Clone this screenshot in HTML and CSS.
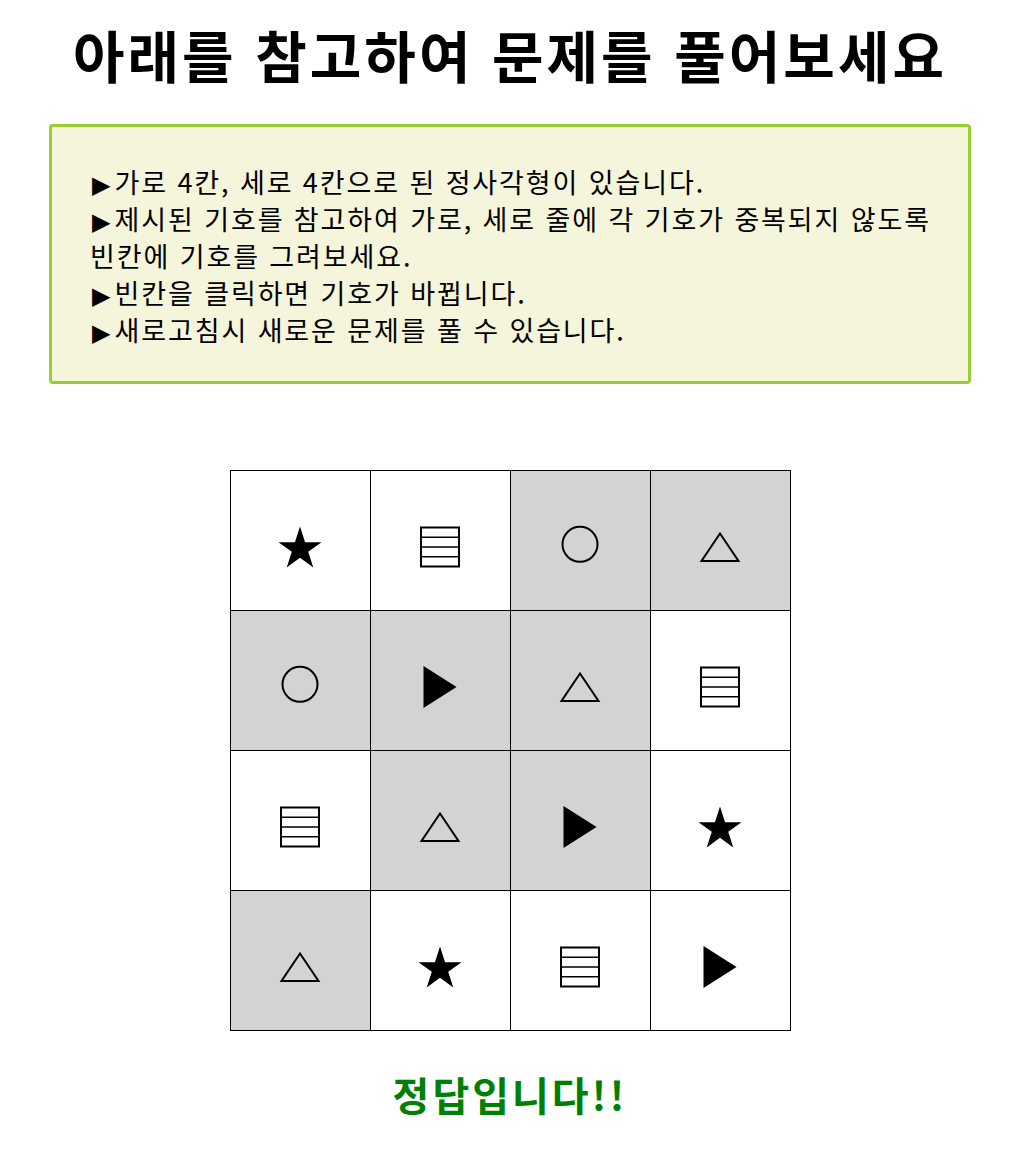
FILE: index.html
```html
<!DOCTYPE html>
<html lang="ko">
<head>
<meta charset="utf-8">
<title>문제</title>
<link rel="stylesheet" href="styles.css">
</head>
<body>
<svg class="defs" width="0" height="0" aria-hidden="true">
  <defs>
    <symbol id="star" viewBox="0 0 44 44">
      <polygon points="22,1.55 27.07,17.17 43.49,17.17 30.21,26.82 35.28,42.43 22,32.78 8.72,42.43 13.79,26.82 0.51,17.17 16.93,17.17" fill="#000"/>
    </symbol>
    <symbol id="lines" viewBox="0 0 44 44">
      <rect x="3" y="2.5" width="38" height="39" fill="none" stroke="#000" stroke-width="2"/>
      <path d="M3 12.25H41M3 22H41M3 31.75H41" stroke="#000" stroke-width="1.6"/>
    </symbol>
    <symbol id="circle" viewBox="0 0 44 44">
      <circle cx="22" cy="19.3" r="17.5" fill="none" stroke="#000" stroke-width="2"/>
    </symbol>
    <symbol id="tri" viewBox="0 0 44 44">
      <polygon points="22,8.5 40.5,36 3.5,36" fill="none" stroke="#000" stroke-width="2"/>
    </symbol>
    <symbol id="play" viewBox="0 0 44 44">
      <polygon points="5.5,1 38.5,22 5.5,43" fill="#000"/>
    </symbol>
  </defs>
</svg>
<h1 class="title">아래를 참고하여 문제를 풀어보세요</h1>
<div class="guide">
  <p class="item">가로 4칸, 세로 4칸으로 된 정사각형이 있습니다.</p>
  <p class="item">제시된 기호를 참고하여 가로, 세로 줄에 각 기호가 중복되지 않도록 빈칸에 기호를 그려보세요.</p>
  <p class="item">빈칸을 클릭하면 기호가 바뀝니다.</p>
  <p class="item">새로고침시 새로운 문제를 풀 수 있습니다.</p>
</div>
<div class="board">
  <div class="cell"><svg class="sym"><use href="#star"/></svg></div>
  <div class="cell"><svg class="sym"><use href="#lines"/></svg></div>
  <div class="cell blank"><svg class="sym"><use href="#circle"/></svg></div>
  <div class="cell blank"><svg class="sym"><use href="#tri"/></svg></div>
  <div class="cell blank"><svg class="sym"><use href="#circle"/></svg></div>
  <div class="cell blank"><svg class="sym"><use href="#play"/></svg></div>
  <div class="cell blank"><svg class="sym"><use href="#tri"/></svg></div>
  <div class="cell"><svg class="sym"><use href="#lines"/></svg></div>
  <div class="cell"><svg class="sym"><use href="#lines"/></svg></div>
  <div class="cell blank"><svg class="sym"><use href="#tri"/></svg></div>
  <div class="cell blank"><svg class="sym"><use href="#play"/></svg></div>
  <div class="cell"><svg class="sym"><use href="#star"/></svg></div>
  <div class="cell blank"><svg class="sym"><use href="#tri"/></svg></div>
  <div class="cell"><svg class="sym"><use href="#star"/></svg></div>
  <div class="cell"><svg class="sym"><use href="#lines"/></svg></div>
  <div class="cell"><svg class="sym"><use href="#play"/></svg></div>
</div>
<p class="result">정답입니다!!</p>
</body>
</html>
```
FILE: styles.css
```css
body {
  margin: 8px;
  font-family: "Noto Sans CJK KR", "Noto Sans", sans-serif;
  color: #000;
  background: #fff;
}
.defs {
  position: absolute;
  width: 0;
  height: 0;
  overflow: hidden;
}
.title {
  margin: 10px 0 0;
  text-align: center;
  font-size: 56px;
  font-weight: bold;
  line-height: 72px;
  letter-spacing: 3px;
}
.guide {
  margin: 34px 41px 0;
  padding: 36px 30px 33px 38px;
  background: #f5f5dc;
  border: 3px solid #9acd32;
  border-radius: 4px;
  font-size: 27px;
  line-height: 37px;
  letter-spacing: 1.9px;
  word-break: keep-all;
}
.item {
  margin: 0;
}
.item::before {
  content: "▶";
  display: inline-block;
  font-family: "DejaVu Sans", sans-serif;
  font-size: 24px;
  line-height: 20px;
  letter-spacing: 0;
  padding: 0 4px 0 2px;
}
.board {
  display: grid;
  grid-template-columns: repeat(4, 139px);
  grid-auto-rows: 139px;
  gap: 1px;
  padding: 1px;
  background: #000;
  width: max-content;
  margin: 86px auto 0;
}
.cell {
  background: #fff;
  display: flex;
  align-items: center;
  justify-content: center;
}
.cell.blank {
  background: #d3d3d3;
}
.sym {
  width: 44px;
  height: 44px;
  margin-top: 12px;
}
.result {
  margin: 34px 0 0;
  text-align: center;
  color: #008000;
  font-size: 40px;
  font-weight: bold;
  letter-spacing: 3px;
}
```
